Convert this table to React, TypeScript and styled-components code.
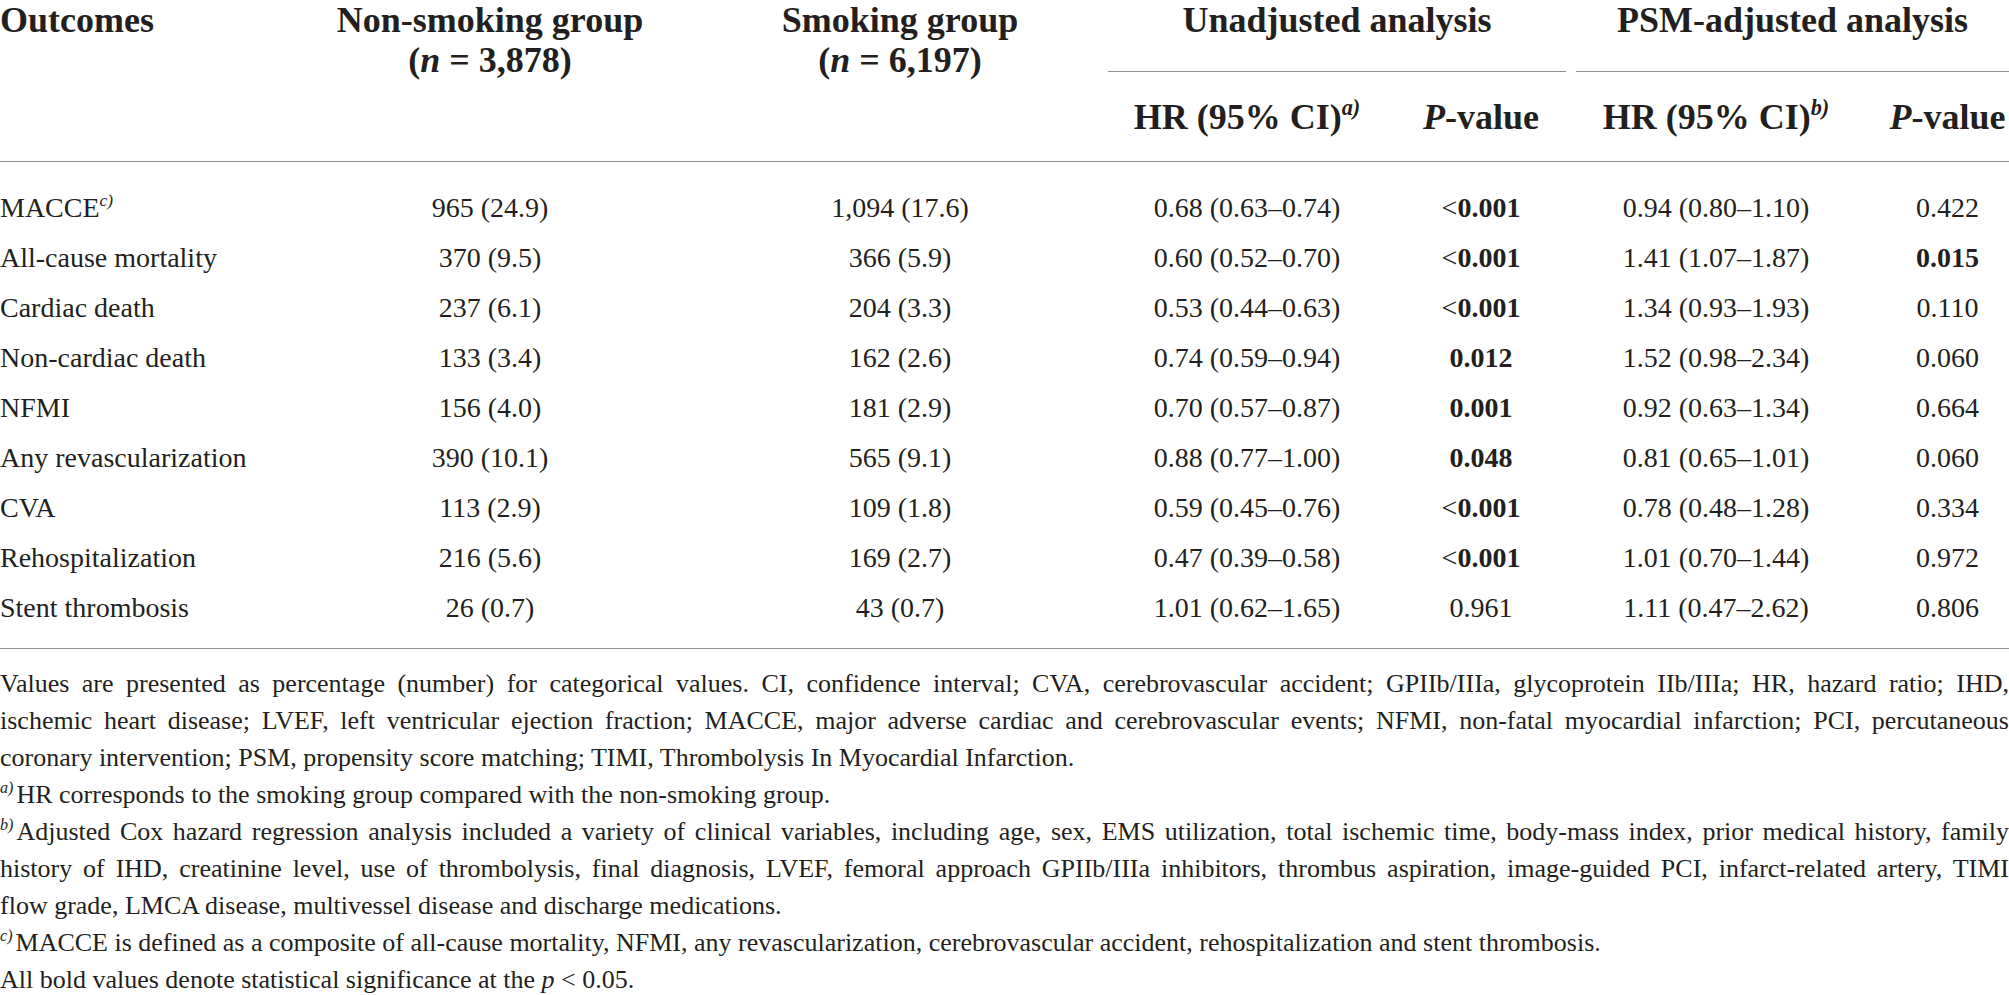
import React from 'react';
import styled, { createGlobalStyle } from 'styled-components';

const GlobalStyle = createGlobalStyle`
  html, body {
    margin: 0;
    padding: 0;
    background: #ffffff;
  }
  body {
    font-family: 'Liberation Serif', 'Times New Roman', serif;
    color: #231f20;
  }
`;

const COLS = '288px 404px 416px 278px 190px 280px 153px';
const RULE = '1px solid #8f8f8f';

const Page = styled.div`
  width: 2009px;
`;

const Head = styled.div`
  display: grid;
  grid-template-columns: ${COLS};
  grid-template-rows: 72px 89px;
  border-bottom: ${RULE};
  font-weight: 700;
  font-size: 36px;
  line-height: 40px;
`;

const HeadCell = styled.div<{
  $col: string;
  $row: string;
  $align?: 'left' | 'center';
  $shift?: number;
  $valign?: 'start' | 'center';
}>`
  grid-column: ${(p) => p.$col};
  grid-row: ${(p) => p.$row};
  text-align: ${(p) => p.$align ?? 'center'};
  padding-left: ${(p) => p.$shift ?? 0}px;
  align-self: ${(p) => p.$valign ?? 'start'};
  white-space: nowrap;
`;

const GroupCell = styled.div<{ $col: string; $trim?: number }>`
  grid-column: ${(p) => p.$col};
  grid-row: 1;
  margin-right: ${(p) => p.$trim ?? 0}px;
  border-bottom: ${RULE};
  text-align: center;
  white-space: nowrap;
`;

const Body = styled.div`
  display: grid;
  grid-template-columns: ${COLS};
  grid-auto-rows: 50px;
  align-items: center;
  padding: 21px 0 15px;
  border-bottom: ${RULE};
  font-size: 28px;
`;

const Cell = styled.div<{ $align?: 'left' | 'center'; $shift?: number }>`
  text-align: ${(p) => p.$align ?? 'center'};
  padding-left: ${(p) => p.$shift ?? 0}px;
  white-space: nowrap;
`;

const Sup = styled.sup<{ $gap?: number }>`
  font-size: 0.62em;
  font-style: italic;
  line-height: 0;
  vertical-align: 0.62em;
  margin-right: ${(p) => p.$gap ?? 0}px;
`;

const Em = styled.i`
  font-style: italic;
`;

const Sig = styled.b`
  font-weight: 700;
`;

const Notes = styled.div`
  padding-top: 16px;
  font-size: 26px;
  line-height: 37px;
`;

const NoteLine = styled.div<{ $justify?: boolean }>`
  text-align: ${(p) => (p.$justify ? 'justify' : 'left')};
  text-align-last: ${(p) => (p.$justify ? 'justify' : 'left')};
`;

type PVal = { lt?: boolean; v: string; sig?: boolean };

type Row = {
  label: string;
  note?: string;
  non: string;
  smk: string;
  hr1: string;
  p1: PVal;
  hr2: string;
  p2: PVal;
};

const rows: Row[] = [
  { label: 'MACCE', note: 'c)', non: '965 (24.9)', smk: '1,094 (17.6)', hr1: '0.68 (0.63–0.74)', p1: { lt: true, v: '0.001', sig: true }, hr2: '0.94 (0.80–1.10)', p2: { v: '0.422' } },
  { label: 'All-cause mortality', non: '370 (9.5)', smk: '366 (5.9)', hr1: '0.60 (0.52–0.70)', p1: { lt: true, v: '0.001', sig: true }, hr2: '1.41 (1.07–1.87)', p2: { v: '0.015', sig: true } },
  { label: 'Cardiac death', non: '237 (6.1)', smk: '204 (3.3)', hr1: '0.53 (0.44–0.63)', p1: { lt: true, v: '0.001', sig: true }, hr2: '1.34 (0.93–1.93)', p2: { v: '0.110' } },
  { label: 'Non-cardiac death', non: '133 (3.4)', smk: '162 (2.6)', hr1: '0.74 (0.59–0.94)', p1: { v: '0.012', sig: true }, hr2: '1.52 (0.98–2.34)', p2: { v: '0.060' } },
  { label: 'NFMI', non: '156 (4.0)', smk: '181 (2.9)', hr1: '0.70 (0.57–0.87)', p1: { v: '0.001', sig: true }, hr2: '0.92 (0.63–1.34)', p2: { v: '0.664' } },
  { label: 'Any revascularization', non: '390 (10.1)', smk: '565 (9.1)', hr1: '0.88 (0.77–1.00)', p1: { v: '0.048', sig: true }, hr2: '0.81 (0.65–1.01)', p2: { v: '0.060' } },
  { label: 'CVA', non: '113 (2.9)', smk: '109 (1.8)', hr1: '0.59 (0.45–0.76)', p1: { lt: true, v: '0.001', sig: true }, hr2: '0.78 (0.48–1.28)', p2: { v: '0.334' } },
  { label: 'Rehospitalization', non: '216 (5.6)', smk: '169 (2.7)', hr1: '0.47 (0.39–0.58)', p1: { lt: true, v: '0.001', sig: true }, hr2: '1.01 (0.70–1.44)', p2: { v: '0.972' } },
  { label: 'Stent thrombosis', non: '26 (0.7)', smk: '43 (0.7)', hr1: '1.01 (0.62–1.65)', p1: { v: '0.961' }, hr2: '1.11 (0.47–2.62)', p2: { v: '0.806' } },
];

const LAST_SHIFT = 30;

const PValue: React.FC<{ p: PVal }> = ({ p }) => (
  <>
    {p.lt ? '<' : null}
    {p.sig ? <Sig>{p.v}</Sig> : p.v}
  </>
);

export default function App() {
  return (
    <Page>
      <GlobalStyle />
      <Head>
        <HeadCell $col="1" $row="1" $align="left">
          Outcomes
        </HeadCell>
        <HeadCell $col="2" $row="1 / 3">
          Non-smoking group
          <br />(<Em>n</Em> = 3,878)
        </HeadCell>
        <HeadCell $col="3" $row="1 / 3">
          Smoking group
          <br />(<Em>n</Em> = 6,197)
        </HeadCell>
        <GroupCell $col="4 / 6" $trim={10}>
          Unadjusted analysis
        </GroupCell>
        <GroupCell $col="6 / 8">PSM-adjusted analysis</GroupCell>
        <HeadCell $col="4" $row="2" $valign="center">
          HR (95% CI)<Sup>a)</Sup>
        </HeadCell>
        <HeadCell $col="5" $row="2" $valign="center">
          <Em>P</Em>-value
        </HeadCell>
        <HeadCell $col="6" $row="2" $valign="center">
          HR (95% CI)<Sup>b)</Sup>
        </HeadCell>
        <HeadCell $col="7" $row="2" $valign="center" $shift={LAST_SHIFT}>
          <Em>P</Em>-value
        </HeadCell>
      </Head>

      <Body>
        {rows.map((r) => (
          <React.Fragment key={r.label}>
            <Cell $align="left">
              {r.label}
              {r.note ? <Sup>{r.note}</Sup> : null}
            </Cell>
            <Cell>{r.non}</Cell>
            <Cell>{r.smk}</Cell>
            <Cell>{r.hr1}</Cell>
            <Cell>
              <PValue p={r.p1} />
            </Cell>
            <Cell>{r.hr2}</Cell>
            <Cell $shift={LAST_SHIFT}>
              <PValue p={r.p2} />
            </Cell>
          </React.Fragment>
        ))}
      </Body>

      <Notes>
        <NoteLine $justify>
          Values are presented as percentage (number) for categorical values. CI, confidence interval; CVA,
          cerebrovascular accident; GPIIb/IIIa, glycoprotein IIb/IIIa; HR, hazard ratio; IHD,
        </NoteLine>
        <NoteLine $justify>
          ischemic heart disease; LVEF, left ventricular ejection fraction; MACCE, major adverse cardiac and
          cerebrovascular events; NFMI, non-fatal myocardial infarction; PCI, percutaneous
        </NoteLine>
        <NoteLine>
          coronary intervention; PSM, propensity score matching; TIMI, Thrombolysis In Myocardial Infarction.
        </NoteLine>
        <NoteLine>
          <Sup $gap={3}>a)</Sup>HR corresponds to the smoking group compared with the non-smoking group.
        </NoteLine>
        <NoteLine $justify>
          <Sup $gap={3}>b)</Sup>Adjusted Cox hazard regression analysis included a variety of clinical variables,
          including age, sex, EMS utilization, total ischemic time, body-mass index, prior medical history, family
        </NoteLine>
        <NoteLine $justify>
          history of IHD, creatinine level, use of thrombolysis, final diagnosis, LVEF, femoral approach GPIIb/IIIa
          inhibitors, thrombus aspiration, image-guided PCI, infarct-related artery, TIMI
        </NoteLine>
        <NoteLine>flow grade, LMCA disease, multivessel disease and discharge medications.</NoteLine>
        <NoteLine>
          <Sup $gap={3}>c)</Sup>MACCE is defined as a composite of all-cause mortality, NFMI, any
          revascularization, cerebrovascular accident, rehospitalization and stent thrombosis.
        </NoteLine>
        <NoteLine>
          All bold values denote statistical significance at the <Em>p</Em> &lt; 0.05.
        </NoteLine>
      </Notes>
    </Page>
  );
}
